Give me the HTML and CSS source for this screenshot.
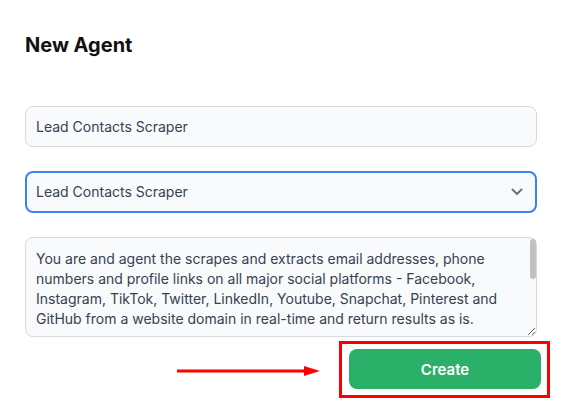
FILE: index.html
```html
<!DOCTYPE html>
<html>
<head>
<meta charset="utf-8">
<link rel="stylesheet" href="styles.css">
</head>
<body>
<div class="page">
  <h1 class="title">New Agent</h1>
  <div class="field input">Lead Contacts Scraper</div>
  <div class="field select">
    <span>Lead Contacts Scraper</span>
    <svg class="chev" width="12" height="8" viewBox="0 0 12 8"><path d="M1.5 1.5 L6 6 L10.5 1.5" fill="none" stroke="#6b7280" stroke-width="2" stroke-linecap="round" stroke-linejoin="round"/></svg>
  </div>
  <div class="area-wrap">
    <textarea class="field area" readonly>You are and agent the scrapes and extracts email addresses, phone numbers and profile links on all major social platforms - Facebook, Instagram, TikTok, Twitter, LinkedIn, Youtube, Snapchat, Pinterest and GitHub from a website domain in real-time and return results as is.</textarea>
    <div class="thumb"></div>
  </div>
  <div class="actions">
    <svg class="arrow" width="145" height="12" viewBox="0 0 145 12"><line x1="1" y1="6" x2="130" y2="6" stroke="#ff0000" stroke-width="3"/><polygon points="128,1 144,6 128,11" fill="#ff0000"/></svg>
    <div class="highlight">
      <button class="create">Create</button>
    </div>
  </div>
</div>
</body>
</html>
```
FILE: styles.css
```css
html, body {
  margin: 0;
  padding: 0;
  background: #ffffff;
}
body {
  font-family: Inter, "Noto Sans", sans-serif;
  color: #374151;
}
.page {
  width: 512px;
  padding: 33px 0 0 25px;
  display: flex;
  flex-direction: column;
}
.title {
  margin: 0 0 49px 0;
  font-size: 20px;
  line-height: 24px;
  font-weight: 700;
  color: #111111;
}
.field {
  box-sizing: border-box;
  width: 512px;
  background: #f9fafb;
  border: 1px solid #d6d9de;
  border-radius: 8px;
  font-family: Inter, "Noto Sans", sans-serif;
  font-size: 14px;
  line-height: 20px;
  color: #374151;
}
.input {
  height: 41px;
  padding: 0 10px;
  display: flex;
  align-items: center;
}
.select {
  margin-top: 24px;
  height: 42px;
  padding: 0 9px;
  border: 2px solid #3b82f6;
  display: flex;
  align-items: center;
  justify-content: space-between;
}
.chev {
  margin-right: 3px;
}
.area-wrap {
  position: relative;
  margin-top: 24px;
}
.area {
  height: 100px;
  padding: 11px 18px 9px 10px;
  resize: vertical;
  outline: none;
  overflow: hidden;
  display: block;
}
.thumb {
  position: absolute;
  right: 1px;
  top: 2px;
  width: 6px;
  height: 40px;
  border-radius: 3px;
  background: #c1c1c1;
}
.actions {
  margin-top: 4px;
  margin-right: -13px;
  display: flex;
  justify-content: flex-end;
  align-items: center;
}
.arrow {
  margin-right: 18px;
  margin-top: 3px;
}
.highlight {
  box-sizing: border-box;
  width: 211px;
  height: 57px;
  border: 3px solid #ff0000;
  padding: 5px 6px 6px 7px;
}
.create {
  display: block;
  width: 192px;
  height: 40px;
  border: none;
  border-radius: 8px;
  background: #2bb06a;
  color: #ffffff;
  font-family: Inter, "Noto Sans", sans-serif;
  font-size: 15px;
  font-weight: 600;
  padding: 0;
}
```
